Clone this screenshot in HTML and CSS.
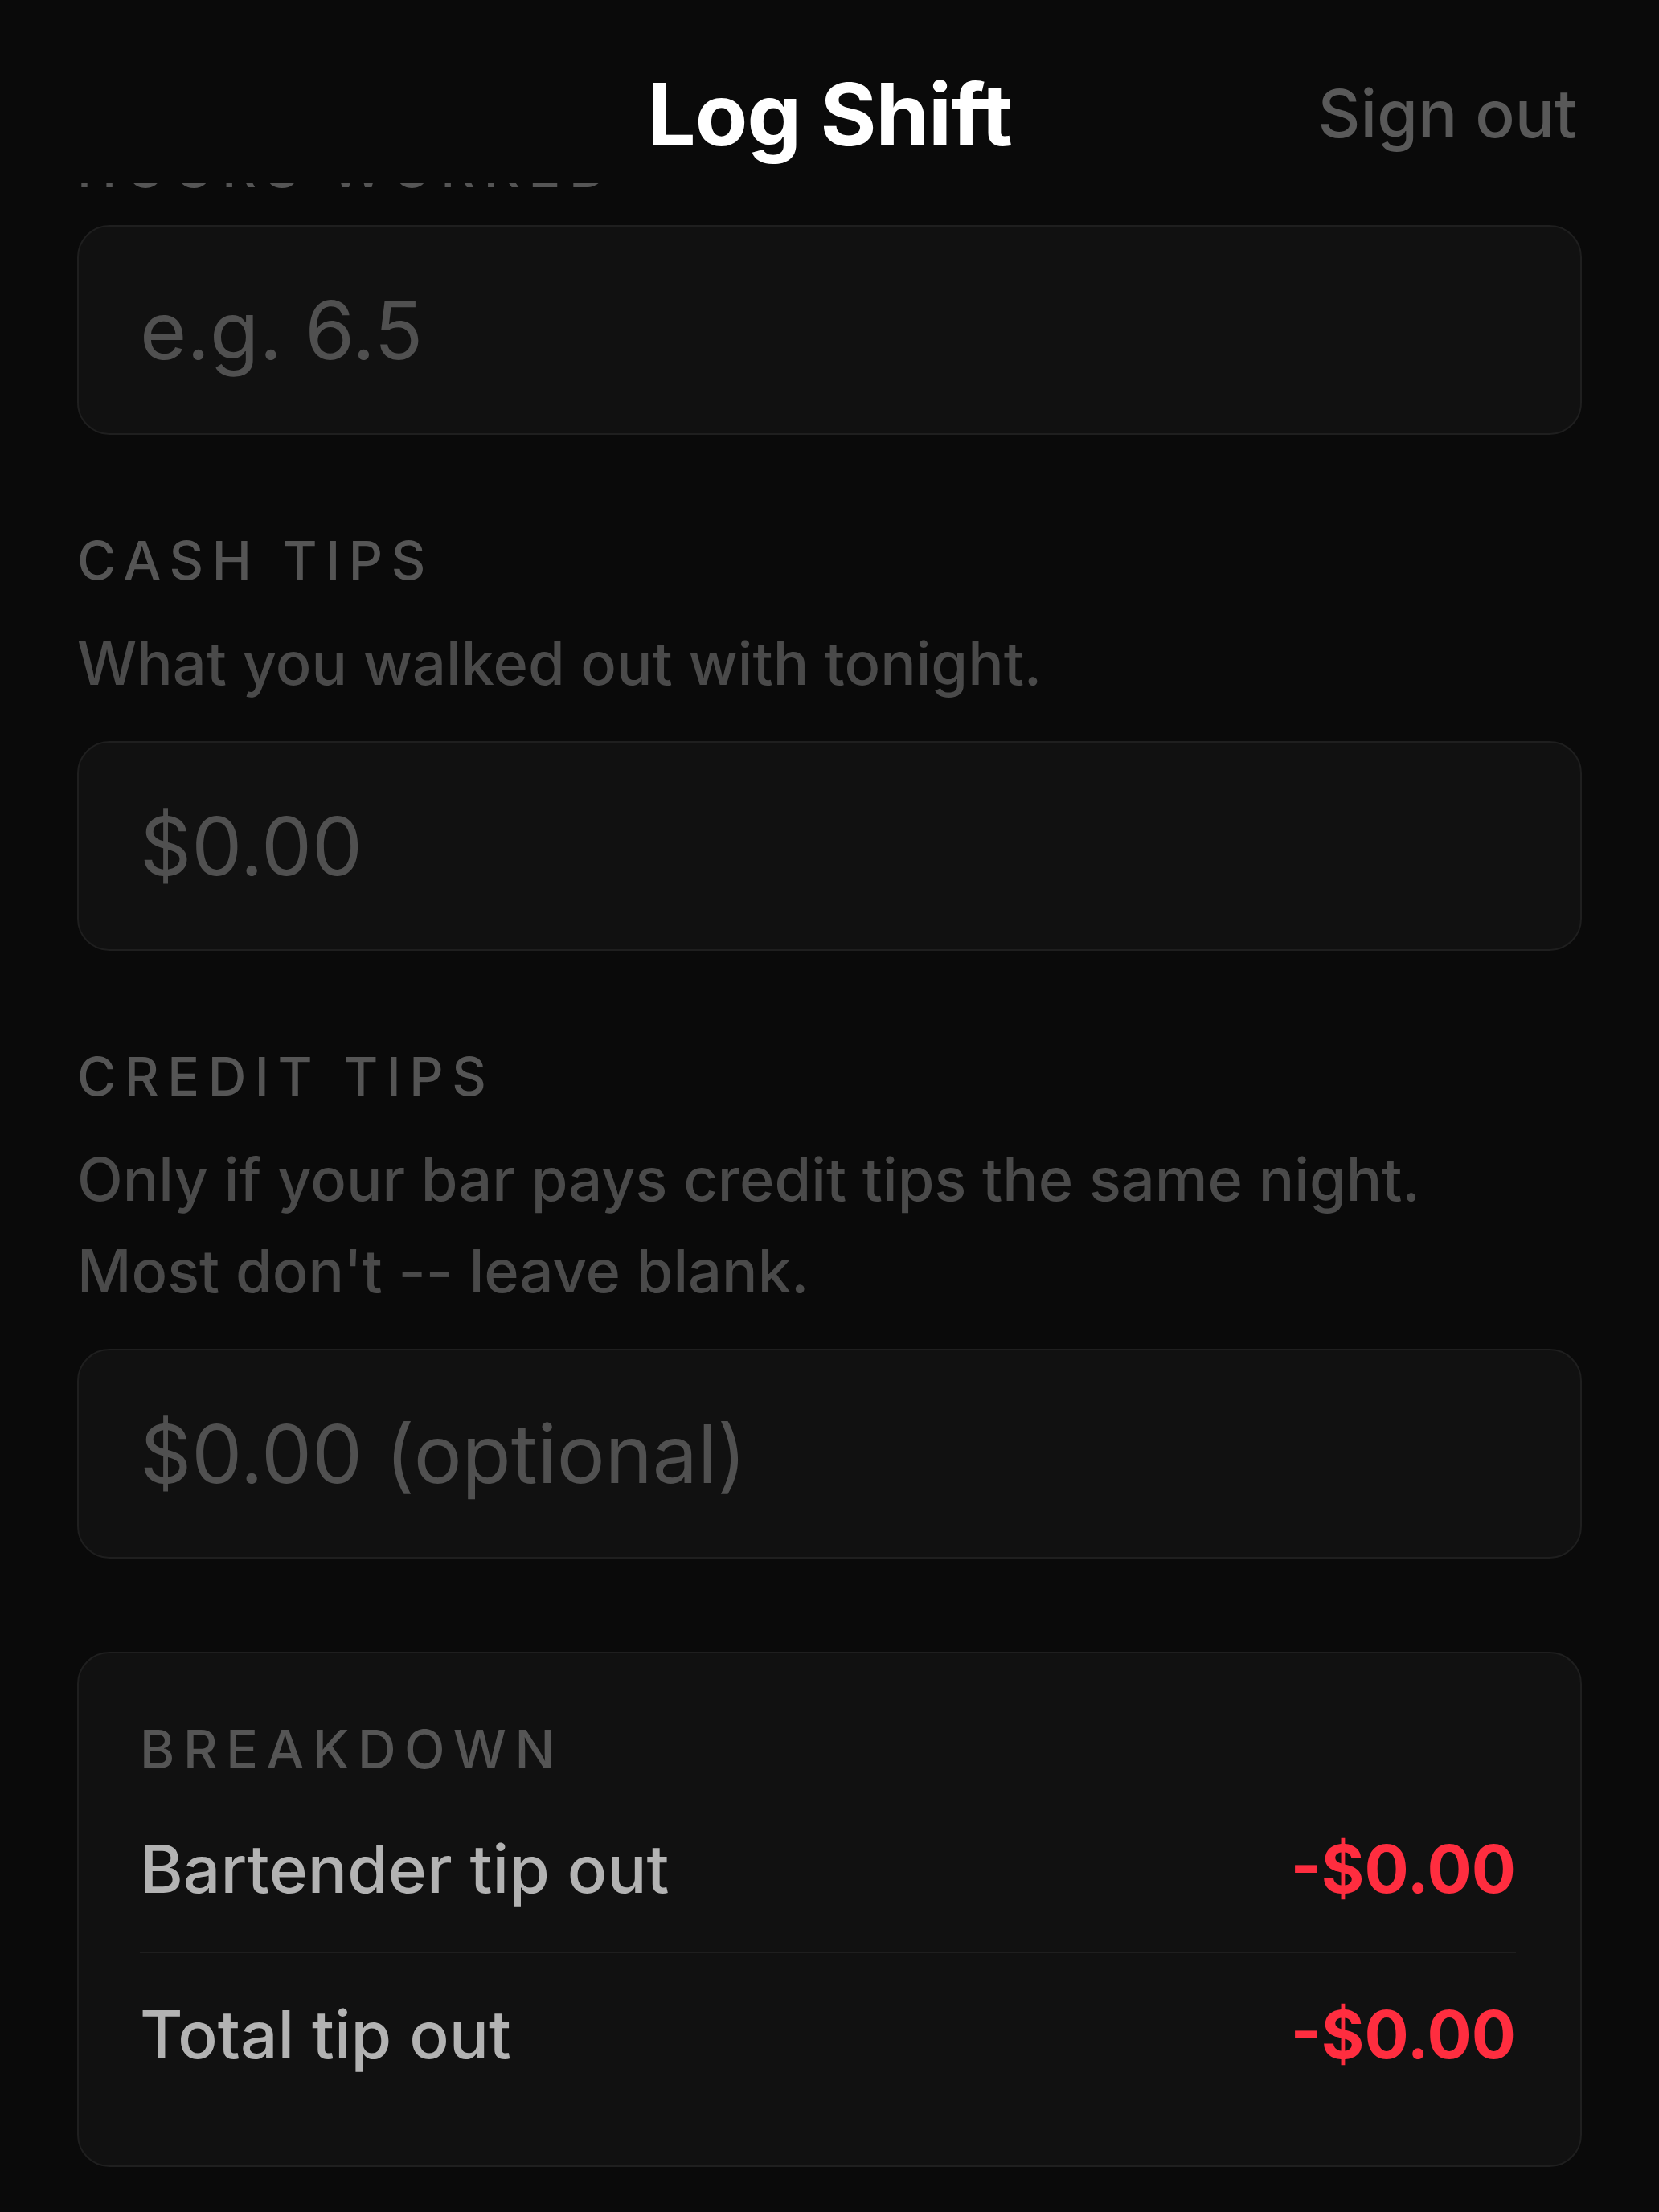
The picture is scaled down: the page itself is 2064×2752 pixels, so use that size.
FILE: index.html
```html
<!DOCTYPE html>
<html lang="en">
<head>
    <meta charset="UTF-8">
    <meta name="viewport" content="width=device-width, initial-scale=1.0">
    <title>Log Shift</title>
    <link rel="stylesheet" href="styles.css">
</head>
<body>

<div class="app">
    <header class="topbar">
        <span></span>
        <h1 class="title">Log Shift</h1>
        <button class="signout">Sign out</button>
    </header>

    <div class="scroll">
        <form class="form">
            <div class="field">
                <label class="label" for="hours">Hours worked</label>
                <input class="input" id="hours" type="text" inputmode="decimal" placeholder="e.g. 6.5">
            </div>

            <div class="field">
                <label class="label" for="cash">Cash tips</label>
                <p class="hint">What you walked out with tonight.</p>
                <input class="input" id="cash" type="text" inputmode="decimal" placeholder="$0.00">
            </div>

            <div class="field">
                <label class="label" for="credit">Credit tips</label>
                <p class="hint">Only if your bar pays credit tips the same night. Most don't -- leave blank.</p>
                <input class="input" id="credit" type="text" inputmode="decimal" placeholder="$0.00 (optional)">
            </div>

            <div class="card">
                <div class="label">Breakdown</div>
                <div class="row">
                    <span>Bartender tip out</span>
                    <span class="amount">-$0.00</span>
                </div>
                <div class="row">
                    <span>Total tip out</span>
                    <span class="amount">-$0.00</span>
                </div>
            </div>
        </form>
    </div>
</div>

</body>
</html>
```

FILE: styles.css
```css
body {
    margin: 0;
    background-color: #0a0a0a;
    color: #b3b3b3;
    font-family: Inter, 'Noto Sans', sans-serif;
}

.app {
    display: flex;
    flex-direction: column;
    height: 2752px;
    overflow: hidden;
}

.topbar {
    display: grid;
    grid-template-columns: 1fr auto 1fr;
    align-items: center;
    height: 126px;
    padding: 79px 102px 23px;
    background-color: #0a0a0a;
    position: relative;
    z-index: 2;
}

.title {
    margin: 0;
    font-size: 107px;
    font-weight: 700;
    line-height: 126px;
    color: #fff;
    letter-spacing: -1px;
}

.signout {
    justify-self: end;
    background: none;
    border: none;
    padding: 0;
    font-family: inherit;
    font-size: 82px;
    font-weight: 500;
    line-height: 126px;
    color: #595959;
    cursor: pointer;
}

.scroll {
    flex: 1;
    overflow: hidden;
}

/* page is scrolled down a bit, first label sits under the bar */
.form {
    display: flex;
    flex-direction: column;
    gap: 116px;
    margin: -59px 96px 0;
}

.field {
    display: flex;
    flex-direction: column;
}

.label {
    display: block;
    font-size: 66px;
    font-weight: 500;
    line-height: 80px;
    letter-spacing: 0.16em;
    text-transform: uppercase;
    color: #555;
    margin-bottom: 31px;
}

.hint {
    max-width: 1740px;
    margin: 0 0 40px;
    font-size: 74px;
    font-weight: 500;
    line-height: 114px;
    color: #4a4a4a;
}

.input {
    box-sizing: border-box;
    height: 261px;
    width: 100%;
    padding: 0 76px;
    background-color: #111;
    border: 2px solid #1f1f1f;
    border-radius: 40px;
    font-family: inherit;
    font-size: 100px;
    color: #ddd;
    outline: none;
}

.input::placeholder {
    color: #505050;
}

.card {
    background-color: #111;
    border: 2px solid #1f1f1f;
    border-radius: 40px;
    padding: 79px 80px 60px 76px;
}

.card .label {
    margin-bottom: 8px;
}

.row {
    display: flex;
    justify-content: space-between;
    padding: 52px 0;
    font-size: 82px;
    font-weight: 500;
    line-height: 100px;
    color: #b3b3b3;
}

.row + .row {
    border-top: 2px solid #1f1f1f;
}

.amount {
    font-weight: 700;
    color: #ff2d3f;
}
```
